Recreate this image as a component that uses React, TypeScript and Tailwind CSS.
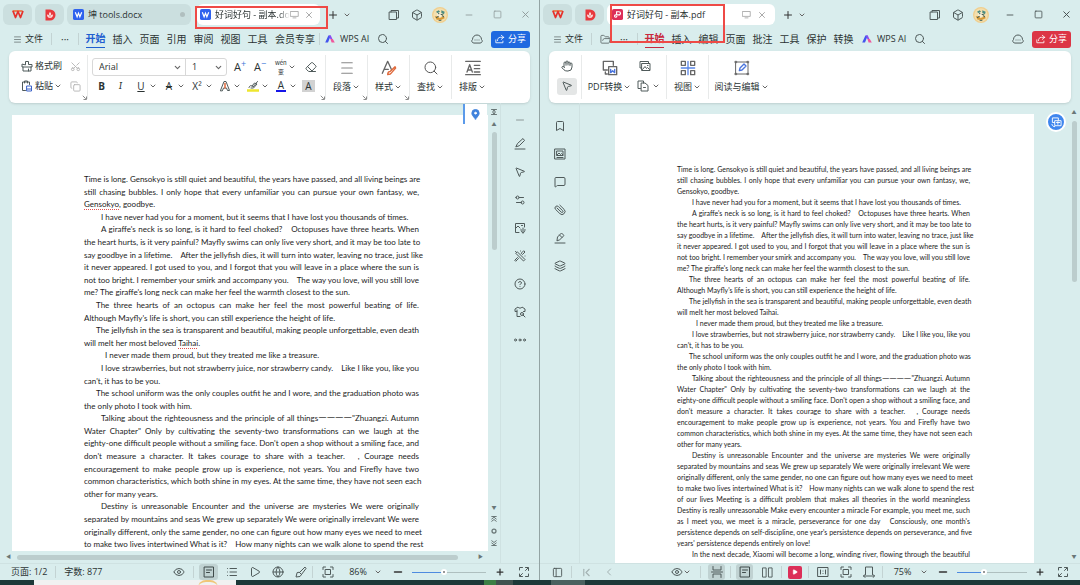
import type { ReactNode } from "react";
import { clsx } from "clsx";
import {
    Bookmark, Box, ChevronDown, ChevronLeft, ChevronFirst, CircleHelp, Copy, Eraser, Eye, FolderOpen,
    Globe, Hand, Layers, List, Menu, MessageSquare, Minus, MousePointer2,
    PanelLeft, Paperclip, Play, Plus, Scissors, Search, Settings2, Square, X,
} from "lucide-react";

const ico = "size-3 text-[#4f5a5a]";

type Line = { text: string; indent?: "s" | "m" | "l"; last?: boolean };

// "~" marks words flagged by the spell checker
const lines: Line[] = [
    { text: "Time is long. Gensokyo is still quiet and beautiful, the years have passed, and all living beings are" },
    { text: "still chasing bubbles. I only hope that every unfamiliar you can pursue your own fantasy, we," },
    { text: "~Gensokyo~, goodbye.", last: true },
    { text: "I have never had you for a moment, but it seems that I have lost you thousands of times.", indent: "m", last: true },
    { text: "A giraffe's neck is so long, is it hard to feel choked?\u3000Octopuses have three hearts. When", indent: "m" },
    { text: "the heart hurts, is it very painful? Mayfly swims can only live very short, and it may be too late to" },
    { text: "say goodbye in a lifetime.\u3000After the jellyfish dies, it will turn into water, leaving no trace, just like" },
    { text: "it never appeared. I got used to you, and I forgot that you will leave in a place where the sun is" },
    { text: "not too bright. I remember your smirk and accompany you.\u3000The way you love, will you still love" },
    { text: "me? The giraffe's long neck can make her feel the warmth closest to the sun.", last: true },
    { text: "The three hearts of an octopus can make her feel the most powerful beating of life.", indent: "s" },
    { text: "Although Mayfly's life is short, you can still experience the height of life.", last: true },
    { text: "The jellyfish in the sea is transparent and beautiful, making people unforgettable, even death", indent: "s" },
    { text: "will melt her most beloved ~Taihai~.", last: true },
    { text: "I never made them proud, but they treated me like a treasure.", indent: "l", last: true },
    { text: "I love strawberries, but not strawberry juice, nor strawberry candy.\u3000Like I like you, like you", indent: "m" },
    { text: "can't, it has to be you.", last: true },
    { text: "The school uniform was the only couples outfit he and I wore, and the graduation photo was", indent: "s" },
    { text: "the only photo I took with him.", last: true },
    { text: "Talking about the righteousness and the principle of all things一一一一\"Zhuangzi. Autumn", indent: "m" },
    { text: "Water Chapter\" Only by cultivating the seventy-two transformations can we laugh at the" },
    { text: "eighty-one difficult people without a smiling face. Don't open a shop without a smiling face, and" },
    { text: "don't measure a character. It takes courage to share with a teacher.\u3000, Courage needs" },
    { text: "encouragement to make people grow up is experience, not years. You and Firefly have two" },
    { text: "common characteristics, which both shine in my eyes. At the same time, they have not seen each" },
    { text: "other for many years.", last: true },
    { text: "Destiny is unreasonable Encounter and the universe are mysteries We were originally", indent: "m" },
    { text: "separated by mountains and seas We grew up separately We were originally irrelevant We were" },
    { text: "originally different, only the same gender, no one can figure out how many eyes we need to meet" },
    { text: "to make two lives intertwined What is it?\u3000How many nights can we walk alone to spend the rest" },
    { text: "of our lives Meeting is a difficult problem that makes all theories in the world meaningless" },
    { text: "Destiny is really unreasonable Make every encounter a miracle For example, you meet me, such" },
    { text: "as I meet you, we meet is a miracle, perseverance for one day\u3000Consciously, one month's" },
    { text: "persistence depends on self-discipline, one year's persistence depends on perseverance, and five" },
    { text: "years' persistence depends entirely on love!", last: true },
    { text: "In the next decade, Xiaomi will become a long, winding river, flowing through the beautiful", indent: "m" },
];

function Icon({ children, className = ico }: { children: ReactNode; className?: string }) {
    return (
        <svg viewBox="0 0 24 24" fill="none" stroke="currentColor" strokeWidth="2" strokeLinecap="round" strokeLinejoin="round" className={clsx("shrink-0", className)} aria-hidden="true">
            {children}
        </svg>
    );
}

function Btn({ label, className, children }: { label: string; className?: string; children: ReactNode }) {
    return (
        <button aria-label={label} className={clsx("flex shrink-0 items-center justify-center", className)}>
            {children}
        </button>
    );
}

function Caret({ className = "size-2" }: { className?: string }) {
    return <ChevronDown strokeWidth={3} className={clsx("shrink-0 text-[#666]", className)} />;
}

function Sep({ className }: { className?: string }) {
    return <span className={clsx("h-3 w-px shrink-0 bg-[#c3d3d3]", className)} />;
}

function WpsLogo() {
    return (
        <svg viewBox="0 0 24 18" className="h-[9px] w-3" fill="none" strokeLinejoin="round" aria-hidden="true">
            <path d="M1 2h20" stroke="#f2632d" strokeWidth="3" />
            <path d="M2 2l5 13 5-12 5 12 5-13" stroke="#e5322d" strokeWidth="3.500" />
        </svg>
    );
}

function DocerLogo() {
    return (
        <svg viewBox="0 0 24 24" className="size-3" aria-hidden="true">
            <path d="M3 1h9a11 11 0 0 1 0 22H3z" fill="#e8383d" />
            <path d="M12 6c3 3 3 5 0 8-3-3-3-5 0-8zM6 11c4 0 6 3 6 7-4 0-6-3-6-7zM18 11c-4 0-6 3-6 7 4 0 6-3 6-7z" fill="#fbdcdc" />
        </svg>
    );
}

function WriterIcon() {
    return (
        <svg viewBox="0 0 24 24" className="size-[11px] shrink-0" aria-hidden="true">
            <rect width="24" height="24" rx="4" fill="#2f62ee" />
            <path d="M5 7l4 10 3-8 3 8 4-10" stroke="#fff" strokeWidth="2.600" fill="none" />
        </svg>
    );
}

function PdfIcon() {
    return (
        <svg viewBox="0 0 24 24" className="size-[11px] shrink-0" aria-hidden="true">
            <rect width="24" height="24" rx="4" fill="#dc2f58" />
            <path d="M10 13V6h5a3.500 3.500 0 0 1 0 7H8a2.500 2.500 0 1 0 2.500 2.500" stroke="#fff" strokeWidth="2.600" fill="none" />
        </svg>
    );
}

function Avatar() {
    return (
        <svg viewBox="0 0 24 24" className="size-4" aria-hidden="true">
            <circle cx="12" cy="12" r="12" fill="#f0cf8e" />
            <circle cx="12" cy="12" r="10" fill="#f3dfae" />
            <path d="M6 7l4-2 2 2-3 3zM14 5l5 2-1 4-4-2z" fill="#4c8c82" />
            <path d="M8 9l4-1 3 3-2 4-5-1z" fill="#fbf1d8" />
            <path d="M4 14l5 0 2 3 7-3 1 3-5 2H7z" fill="#d99a36" />
            <path d="M9 10h2M13 11l4 1M6 16l4-2M15 13l3 2M10 20h4" stroke="#3e5d58" strokeWidth="1.500" />
        </svg>
    );
}

function AiLogo() {
    return (
        <svg viewBox="0 0 24 20" className="mr-[5px] h-2 w-[10px]" aria-hidden="true">
            <path d="M8 1h6L7 19H0z" fill="#4254ee" />
            <path d="M9 1h5l4 9h-5z" fill="#8c4bf0" />
            <path d="M13 10h6l5 9h-8z" fill="#f0569c" />
        </svg>
    );
}

function WindowButtons({ faded }: { faded?: boolean }) {
    const tone = faded ? "text-[#8d9898]" : "text-[#3f4848]";
    return (
        <div className="ml-auto flex items-center">
            <Btn label="窗口" className="w-[23px]">
                <Icon><path d="M3 6h14v15H3zM6 6V3h15v15h-4" /></Icon>
            </Btn>
            <Btn label="应用" className="w-[23px]"><Box className={ico} /></Btn>
            <Btn label="账户" className="w-[23px]"><Avatar /></Btn>
            <Btn label="最小化" className="ml-1 w-7"><Minus className={clsx("size-[10px]", tone)} /></Btn>
            <Btn label="最大化" className="w-7"><Square className={clsx("size-[9px]", tone)} /></Btn>
            <Btn label="关闭" className="w-7"><X className={clsx("size-[11px]", tone)} /></Btn>
        </div>
    );
}

function AppTabs() {
    return (
        <>
            <Btn label="WPS" className="h-[21px] w-[29px] rounded-md bg-[#cbdfdf]"><WpsLogo /></Btn>
            <Btn label="稻壳" className="h-[21px] w-[29px] rounded-md bg-[#cbdfdf]"><DocerLogo /></Btn>
        </>
    );
}

function MenuBar({ items, accent, children }: { items: string[]; accent: "blue" | "red"; children?: ReactNode }) {
    return (
        <nav className="flex h-5 items-center pr-[9px] pl-[13px] text-[10px]">
            <button className="flex items-center gap-[3px] text-[9px]"><Menu className="size-[9px] text-[#657070]" />文件</button>
            <Sep className="ml-2" />
            {children}
            <Btn label="更多" className="w-[26px]">···</Btn>
            <Sep className="mr-[3px]" />
            {items.map((item, i) => (
                <button
                    key={item}
                    className={clsx(
                        "h-5 shrink-0 leading-[17px]",
                        item.length > 2 ? "w-12" : "w-[27px]",
                        i === 0 && "font-bold",
                        i === 0 && (accent === "blue" ? "text-[#1f5fd0]" : "text-[#c8283c]"),
                    )}
                >
                    {item}
                    {i === 0 && <span className={clsx("mx-auto block h-px w-[19px]", accent === "blue" ? "bg-[#1f5fd0]" : "bg-[#c8283c]")} />}
                </button>
            ))}
            {accent === "blue" && <Sep />}
            <button className="ml-[5px] flex shrink-0 items-center text-[9px]"><AiLogo />WPS AI</button>
            <Btn label="搜索" className="ml-2 w-3"><Search className={ico} /></Btn>
            <Btn label="云" className="ml-auto w-3">
                <Icon><path d="M5 20a4 4 0 0 1-2-7 9 9 0 0 1 18 0 4 4 0 0 1-2 7zM8 14h.1M12 14h.1M16 14h.1" /></Icon>
            </Btn>
            <button className={clsx("ml-2 flex h-[17px] w-[39px] shrink-0 items-center justify-center gap-[3px] rounded-[3px] text-[9px] text-white", accent === "blue" ? "bg-[#1f69e0]" : "bg-[#dc3545]")}>
                <Icon className="size-[10px]"><path d="M15 3l6 5-6 5M21 8h-8c-5 0-7 3-7 8M2 14v7h17v-4" /></Icon>
                分享
            </button>
        </nav>
    );
}

function Tool({ label, className, children }: { label: string; className: string; children: ReactNode }) {
    return (
        <button className={clsx("flex h-full shrink-0 flex-col items-center justify-center gap-[2px] border-l border-[#e8eaea] pb-[2px]", className)}>
            <span className="flex h-5 items-center">{children}</span>
            <span className="flex h-[14px] items-center gap-px leading-[14px]">{label}<Caret /></span>
        </button>
    );
}

function Split({ label, children }: { label: string; children: ReactNode }) {
    return (
        <button aria-label={label} className="flex w-7 shrink-0 items-center pl-[3px] leading-[13px]">
            <span className="flex w-4 justify-center">{children}</span>
            <Caret />
        </button>
    );
}

// Dialog launcher in a ribbon group's bottom right corner
function Corner() {
    return (
        <svg viewBox="0 0 8 8" className="absolute -right-px -bottom-[2px] size-[6px]" fill="none" stroke="#888" aria-hidden="true">
            <path d="M1 1l4 4M6 2v4H2" strokeWidth="1.300" />
        </svg>
    );
}

function Zoom({ id, value, fill, width }: { id: string; value: number; fill: string; width: string }) {
    return (
        <>
            <label htmlFor={id} className="sr-only">缩放</label>
            <input
                id={id}
                type="range"
                defaultValue={value}
                className={clsx(
                    "h-px shrink-0 appearance-none bg-linear-to-r from-[#4d8be0] to-[#aebfbf] [&::-webkit-slider-thumb]:size-[6px] [&::-webkit-slider-thumb]:appearance-none [&::-webkit-slider-thumb]:rounded-full [&::-webkit-slider-thumb]:border-2 [&::-webkit-slider-thumb]:border-white [&::-webkit-slider-thumb]:bg-[#777]",
                    fill,
                    width,
                )}
            />
        </>
    );
}

function FitIcon() {
    return <Icon><path d="M2 7V2h5M17 2h5v5M22 17v5h-5M7 22H2v-5M7 7h10v10H7z" /></Icon>;
}

function PageIcon() {
    return <Icon className="size-3 text-[#3f4a4a]"><path d="M3 2h18v20H3zM7 8h10M7 13h6" /></Icon>;
}

function ExpandIcon() {
    return <Icon><path d="M3 8V3h6M15 3h6v6M21 16v5h-6M9 21H3v-5M15 9l5-5M9 15l-5 5" /></Icon>;
}

function DocText({ rows, indents, className, spell }: { rows: Line[]; indents: { s: string; m: string; l: string }; className: string; spell?: boolean }) {
    return (
        <article className={clsx("flex flex-col font-[Lato,'Noto_Sans_CJK_SC',sans-serif] text-[#1c1c1c]", className)}>
            {rows.map((row) => (
                <p key={row.text} className={clsx("min-h-0 flex-1 whitespace-nowrap", row.last ? "text-left" : "text-justify [text-align-last:justify]", row.indent && indents[row.indent])}>
                    {row.text.split("~").map((part, i) =>
                        i % 2 && spell ? <span key={i} className="underline decoration-[#e0504f] decoration-dotted decoration-1 underline-offset-2">{part}</span> : part,
                    )}
                </p>
            ))}
        </article>
    );
}

function WriterRibbon() {
    return (
        <div className="mx-[9px] flex h-[52px] shrink-0 items-center rounded-md bg-white pl-3 text-[9px] shadow-sm">
            <div className="relative flex h-11 w-[66px] shrink-0 flex-col justify-center gap-1 pb-[2px]">
                <div className="flex h-4 items-center">
                    <button className="flex items-center gap-[2px]">
                        <Icon><path d="M9 9V3h6v6h7v5H2V9zM4 14v8h16v-8M15 18v4" /></Icon>格式刷
                    </button>
                    <Btn label="剪切" className="ml-2"><Scissors className="size-[11px] -rotate-90 text-[#b5b5b5]" /></Btn>
                </div>
                <div className="flex h-4 items-center">
                    <button className="flex items-center gap-[2px]">
                        <Icon><path d="M9 21H3V4h14v5M7 6V2h6v4" /><path d="M12 12h9v10h-9zM12 18h9" stroke="#3b62c8" /></Icon>粘贴
                    </button>
                    <Caret className="ml-px size-2" />
                    <Btn label="复制" className="ml-2"><Copy className="size-[11px] text-[#b5b5b5]" /></Btn>
                </div>
                <Corner />
            </div>
            <div className="relative flex h-11 w-[238px] shrink-0 flex-col justify-center gap-[2px] border-l border-[#e8eaea] pb-[2px] pl-1">
                <div className="flex h-[18px] items-center">
                    <div className="flex h-[18px] w-[135px] shrink-0 items-center rounded-[3px] border border-[#d8d8d8]">
                        <select aria-label="字体" className="w-20 appearance-none pl-[6px] outline-none"><option>Arial</option></select>
                        <Caret className="size-[9px]" />
                        <span className="ml-[3px] h-full w-px bg-[#d8d8d8]" />
                        <select aria-label="字号" className="w-7 appearance-none pl-[6px] outline-none"><option>1</option></select>
                        <Caret className="size-[9px]" />
                    </div>
                    <button className="ml-[3px] w-5 text-[11px] leading-3">A<sup className="text-[9px] text-[#3b76d8]">+</sup></button>
                    <button className="w-5 text-[11px] leading-3">A<sup className="text-[9px] text-[#3b76d8]">−</sup></button>
                    <button className="ml-[5px] flex w-6 items-center gap-px">
                        <span className="flex flex-col items-center font-['Noto_Sans_CJK_SC',sans-serif] text-[6px] leading-[9px]"><span>wén</span><span>变</span></span>
                        <Caret />
                    </button>
                    <Btn label="清除格式" className="ml-[2px] w-5"><Eraser className={ico} /></Btn>
                </div>
                <div className="flex h-4 items-center text-[10px]">
                    <button className="w-[19px] font-bold">B</button>
                    <button className="w-[19px] font-serif italic">I</button>
                    <Split label="下划线"><span className="underline">U</span></Split>
                    <Split label="删除线"><span className="line-through">A</span></Split>
                    <Split label="上标"><span>X²</span></Split>
                    <Split label="文字效果">
                        <Icon><path d="M3 21L10 3h4l7 18h-4l-2-5H9l-2 5z" /><path d="M12 7v9" stroke="#e06a3c" strokeWidth="3" /></Icon>
                    </Split>
                    <Split label="突出显示">
                        <Icon><path d="M4 15c2-6 6-4 8-1l9-11M10 12l5-6 5 2-7 8H8" /><path d="M1 21h22" stroke="#eee62e" strokeWidth="5" /></Icon>
                    </Split>
                    <Split label="字体颜色"><span className="border-b-2 border-[#1616e8] px-[2px] leading-[10px]">A</span></Split>
                    <button className="ml-1 w-[13px] bg-[#d2d2d2] leading-3">A</button>
                </div>
                <Corner />
            </div>
            <div className="flex h-11">
                <div className="relative">
                    <Tool label="段落" className="w-[42px]"><Icon className="size-[14px] text-[#888]"><path d="M3 3h18M3 12h18M3 21h18" /></Icon></Tool>
                    <Corner />
                </div>
                <div className="relative">
                    <Tool label="样式" className="w-[42px]">
                        <Icon className="size-4 text-[#666]"><path d="M2 20L10 2l6 13M5 14h6" /><path d="M10 22c0-4 2-5 4-5l7-7 1 2-6 7c-1 2-3 3-6 3z" stroke="#e06a3c" /></Icon>
                    </Tool>
                    <Corner />
                </div>
                <Tool label="查找" className="w-[42px]"><Search strokeWidth={1.5} className="size-4 text-[#555]" /></Tool>
                <Tool label="排版" className="w-[42px]">
                    <Icon className="size-4 text-[#666]"><path d="M1 2h22M1 22h22M3 18L7 7l4 11M5 15h4M14 8h8M14 13h8M14 18h8" /></Icon>
                </Tool>
            </div>
        </div>
    );
}

function WriterWindow() {
    return (
        <section className="flex min-h-0 min-w-0 flex-col border-r border-[#93a4a4] bg-[#d9eded] shadow-md">
            <header className="flex h-[29px] shrink-0 items-center gap-[3px] pl-[3px]">
                <AppTabs />
                <button className="flex h-[21px] w-[124px] shrink-0 items-center gap-1 rounded-md bg-[#cbdfdf] px-[6px] text-[9px]">
                    <WriterIcon />坤 tools.docx<span className="ml-auto size-[5px] rounded-full bg-[#b0bfbf]" />
                </button>
                <div className="relative ml-[3px] flex h-[21px] w-[123px] shrink-0 items-center rounded-md bg-white px-[3px] text-[9px]">
                    <WriterIcon />
                    <span className="ml-1 flex-1 overflow-hidden mask-r-from-85% whitespace-nowrap">好词好句 - 副本.docx</span>
                    <Icon className="mr-[2px] size-[9px] text-[#999]"><path d="M2 4h20v13H2zM8 21h8" /></Icon>
                    <Btn label="关闭标签" className="w-4"><X className="size-[10px] text-[#999]" /></Btn>
                    <span className="pointer-events-none absolute top-[2px] -right-2 -bottom-1 -left-[2px] border-2 border-[#ee4a46]" />
                </div>
                <Btn label="新建标签" className="ml-[3px] w-[14px]"><Plus className="size-3 text-[#333]" /></Btn>
                <Caret />
                <WindowButtons faded />
            </header>
            <MenuBar accent="blue" items={["开始", "插入", "页面", "引用", "审阅", "视图", "工具", "会员专享"]} />
            <div className="h-[2px] shrink-0" />
            <WriterRibbon />
            <div className="flex min-h-0 flex-1">
                <div className="relative flex min-w-0 flex-1 flex-col pt-3 pl-3">
                    <div className="absolute top-px right-px flex h-[20px] w-6 items-center justify-center border-l-2 border-[#5b9aea] bg-white pr-[2px]">
                        <Icon className="size-[11px] text-[#3f82dc]"><path d="M12 22C5 14 4 12 4 9a8 8 0 0 1 16 0c0 3-1 5-8 13z" fill="currentColor" /><circle cx="12" cy="9" r="2" fill="#fff" stroke="#fff" /></Icon>
                    </div>
                    <div className="flex min-h-0 flex-1 bg-white pt-[58px] pr-[69px] pl-[72px]">
                        <DocText spell rows={lines.slice(0, 30)} indents={{ s: "pl-[12px]", m: "pl-[17px]", l: "pl-[21px]" }} className="min-w-0 flex-1 text-[8px] leading-[13px]" />
                    </div>
                    <div className="-ml-3 flex h-3 shrink-0 items-center pr-[5px] pl-[6px]">
                        <span className="text-[5px] text-[#6a7777]">◀</span>
                        <span className="mr-5 ml-[6px] h-[5px] flex-1 rounded-full bg-[#bccdcd]" />
                        <span className="text-[5px] text-[#6a7777]">▶</span>
                    </div>
                </div>
                <div className="flex w-3 shrink-0 flex-col items-center pt-[6px] pb-[14px] text-[5px] leading-[11px] text-[#6a7777]">
                    <Icon className="size-[6px]"><path d="M2 2h20M2 22h20M12 4v16M7 9l5-4 5 4M7 15l5 4 5-4" strokeWidth="4" /></Icon>
                    <span className="mt-1">▲</span>
                    <span className="mt-[2px] h-[118px] w-[5px] shrink-0 rounded-full bg-[#bccdcd]" />
                    <span className="mt-auto">▼</span>
                    <Icon className="my-[3px] size-[6px]"><path d="M3 2h18M3 12l9-7 9 7M3 21l9-7 9 7" strokeWidth="4" /></Icon>
                    <Icon className="my-[3px] size-[6px]"><circle cx="12" cy="12" r="8" strokeWidth="5" /></Icon>
                    <Icon className="my-[3px] size-[6px]"><path d="M3 3l9 7 9-7M3 12l9 7 9-7M3 22h18" strokeWidth="4" /></Icon>
                </div>
                <aside className="flex w-[39px] shrink-0 flex-col items-center border-l border-[#cfe2e2] pt-[3px]">
                    <Btn label="收起" className="-mb-1 h-7"><Minus className="size-3 text-[#8d9898]" /></Btn>
                    <Btn label="编辑" className="h-7"><Icon><path d="M4 17l3-6L18 1l3 4L11 15zM2 22h20" /></Icon></Btn>
                    <Btn label="选择" className="h-7"><MousePointer2 className={ico} /></Btn>
                    <Btn label="设置" className="h-7"><Settings2 className={clsx(ico, "rotate-180")} /></Btn>
                    <Btn label="图片" className="h-7">
                        <Icon><path d="M10 21H3V3h18v7M3 13l5-5 4 4M15 7h2" /><path d="M18 12v10M14 15c0 4 2 6 4 7 2-1 4-3 4-7" /></Icon>
                    </Btn>
                    <Btn label="工具箱" className="h-7">
                        <Icon><path d="M7 4l15 15-3 3L4 7zM20 2l2 2-5 5-2-2zM2 20l5-5 2 2-5 5zM3 3h.1M13 2h.1M22 12h.1" /></Icon>
                    </Btn>
                    <Btn label="帮助" className="h-7"><CircleHelp className={ico} /></Btn>
                    <Btn label="换肤" className="h-7">
                        <Icon><path d="M12 21H6V11H2V6l6-4c1 3 7 3 8 0l6 4v5h-3M6 11V8" /><circle cx="16" cy="16" r="3" /><path d="M18 18l4 4" /></Icon>
                    </Btn>
                    <Btn label="更多工具" className="h-7">
                        <Icon><circle cx="3" cy="12" r="2" /><circle cx="12" cy="12" r="2" /><circle cx="21" cy="12" r="2" /></Icon>
                    </Btn>
                </aside>
            </div>
            <footer className="flex h-[17px] shrink-0 items-center border-t border-[#cfe2e2] pr-[5px] pl-[11px] text-[9px]">
                <span>页面: 1/2</span>
                <Sep className="mx-2" />
                <span>字数: 877</span>
                <div className="ml-auto flex h-full items-center">
                    <Btn label="护眼" className="w-6"><Eye className={ico} /></Btn>
                    <Sep className="mr-[3px] ml-[2px]" />
                    <Btn label="页面视图" className="mx-[2px] h-4 w-[19px] rounded-[3px] bg-[#c0d2d2]"><PageIcon /></Btn>
                    <Btn label="大纲" className="w-[23px]"><List className={ico} /></Btn>
                    <Btn label="播放" className="w-[23px]"><Play className={ico} /></Btn>
                    <Btn label="网页视图" className="w-[23px]"><Globe className={ico} /></Btn>
                    <Btn label="写作" className="w-[23px]"><Icon><path d="M9 13L20 2l2 3-9 12M9 13l4 4-3 4-8 1 2-8z" /></Icon></Btn>
                    <Sep />
                    <Btn label="适应" className="w-[29px]"><FitIcon /></Btn>
                    <span className="w-8 text-center">86%</span>
                    <Caret className="mr-[2px] size-2" />
                    <Btn label="缩小" className="w-7"><Minus strokeWidth={3} className="size-3 text-[#333]" /></Btn>
                    <Zoom id="zoom-writer" value={42} fill="from-43% to-43%" width="w-[74px]" />
                    <Btn label="放大" className="w-7"><Plus strokeWidth={3} className="size-[10px] text-[#333]" /></Btn>
                    <Btn label="全屏" className="w-5"><ExpandIcon /></Btn>
                </div>
            </footer>
        </section>
    );
}

function PdfRibbon() {
    return (
        <div className="mx-[9px] flex h-[52px] shrink-0 items-center rounded-md bg-white text-[9px] shadow-sm">
            <div className="flex w-8 shrink-0 flex-col items-center gap-[3px] pb-[2px] pl-1">
                <Btn label="手型" className="h-[17px] w-5"><Hand className={ico} /></Btn>
                <Btn label="选择" className="h-[17px] w-5 rounded-[3px] bg-[#e4e6e6]"><MousePointer2 className={ico} /></Btn>
            </div>
            <div className="flex h-11">
                <Tool label="PDF转换" className="w-[56px]">
                    <Icon className="size-4 text-[#666]"><path d="M8 15H2V2h15v6M5 18v3h3" /><path d="M10 10h12v12H10z" /><path d="M13 14v5l3-3 3 3v-5" stroke="#4a74dc" /></Icon>
                </Tool>
                <div className="flex w-[29px] flex-col justify-center gap-1 pb-[2px]">
                    <Btn label="图片" className="mr-[14px] h-4">
                        <Icon><path d="M5 16H2V3h17v3M6 7h16v14H6zM7 19l5-6 3 4 2-2 4 4M17 11h1" /></Icon>
                    </Btn>
                    <button aria-label="拆分合并" className="flex h-4 items-center gap-[3px]">
                        <Icon><path d="M7 17H2V2h11v4M9 6h7l6 5v11H9zM13 15h4" /></Icon><Caret />
                    </button>
                </div>
                <Tool label="视图" className="w-[42px]">
                    <Icon className="size-4 text-[#666]"><path d="M2 2h6v6H2zM16 2h6v6h-6zM2 16h6v6H2zM16 16h6v6h-6z" /><path d="M12 2v20M2 12h20" stroke="#5a86e8" /></Icon>
                </Tool>
                <Tool label="阅读与编辑" className="w-[66px]">
                    <Icon className="size-4 text-[#666]"><path d="M3 3h18v18H3zM2 2h2v2H2zM20 2h2v2h-2zM2 20h2v2H2zM20 20h2v2h-2z" strokeWidth="1.500" /><path d="M8 16l1-4 6-6 3 3-6 6z" stroke="#4a74dc" /></Icon>
                </Tool>
            </div>
        </div>
    );
}

function PdfWindow() {
    return (
        <section className="flex min-h-0 min-w-0 flex-col bg-[#d9eded]">
            <header className="flex h-[29px] shrink-0 items-center gap-[3px] pl-[3px]">
                <AppTabs />
                <div className="relative flex h-[21px] w-[168px] shrink-0 items-center rounded-md bg-white px-[5px] text-[9px]">
                    <PdfIcon />
                    <span className="ml-1 flex-1 whitespace-nowrap">好词好句 - 副本.pdf</span>
                    <Icon className="mx-[3px] size-[9px] text-[#999]"><path d="M2 4h20v13H2zM8 21h8" /></Icon>
                    <Btn label="关闭标签" className="w-4"><X className="size-[10px] text-[#999]" /></Btn>
                    <span className="pointer-events-none absolute top-0 left-[3px] h-[39px] w-[115px] border-2 border-[#ee4a46]" />
                </div>
                <Btn label="新建标签" className="ml-[3px] w-[14px]"><Plus className="size-3 text-[#333]" /></Btn>
                <Caret />
                <WindowButtons />
            </header>
            <MenuBar accent="red" items={["开始", "插入", "编辑", "页面", "批注", "工具", "保护", "转换"]}>
                <Btn label="打开" className="ml-[7px] w-3"><FolderOpen className="size-[11px] text-[#657070]" /></Btn>
            </MenuBar>
            <div className="h-[2px] shrink-0" />
            <PdfRibbon />
            <div className="flex min-h-0 flex-1">
                <aside className="flex w-10 shrink-0 flex-col items-center border-r border-[#cfe2e2] pt-[9px]">
                    <Btn label="书签" className="h-7"><Bookmark className={ico} /></Btn>
                    <Btn label="缩略图" className="h-7"><Icon><path d="M2 2h20v20H2zM6 6h12v9H6zM6 14l4-4 3 3 2-2 3 3M6 19h12" /></Icon></Btn>
                    <Btn label="批注" className="h-7"><MessageSquare className={ico} /></Btn>
                    <Btn label="附件" className="h-7"><Paperclip className={clsx(ico, "-rotate-90")} /></Btn>
                    <Btn label="签名" className="h-7"><Icon><path d="M6 17l1-7 8-8 5 5-8 8zM11 6l5 5M2 22h20" /></Icon></Btn>
                    <Btn label="图层" className="h-7"><Layers className={ico} /></Btn>
                </aside>
                <div className="flex min-w-0 flex-1 pt-[11px] pl-[35px]">
                    <div className="min-w-0 flex-1 overflow-hidden bg-white pt-[50px] pr-16 pl-[62px]">
                        <DocText rows={lines} indents={{ s: "pl-[12px]", m: "pl-[15px]", l: "pl-[19px]" }} className="text-[7px] leading-[11px]" />
                    </div>
                </div>
                <div className="flex w-[46px] shrink-0 justify-between pl-3">
                    <Btn label="翻译" className="mt-[9px] size-5 rounded-full border-2 border-white bg-[#3f86ee] text-white">
                        <Icon className="size-[11px] text-white"><path d="M8 12H3V2h13v5M9 8h13v11H9zM12 12h7M15 10v6M2 16c1 4 3 5 6 5" /></Icon>
                    </Btn>
                    <div className="flex w-3 flex-col items-center pt-1 pb-[2px] text-[5px] leading-[10px] text-[#6a7777]">
                        <span>▲</span>
                        <span className="mt-1 h-[161px] w-[5px] rounded-full bg-[#bccdcd]" />
                        <span className="mt-auto">▼</span>
                    </div>
                </div>
            </div>
            <footer className="flex h-[17px] shrink-0 items-center border-t border-[#cfe2e2] pr-[7px] pl-[5px] text-[9px]">
                <Btn label="侧栏" className="w-6"><PanelLeft className="size-[11px] text-[#4f5a5a]" /></Btn>
                <Sep className="mx-[2px]" />
                <Btn label="首页" className="w-6"><ChevronFirst className="size-[13px] text-[#a3b1b1]" /></Btn>
                <Btn label="上一页" className="w-[22px]"><ChevronLeft className="size-3 text-[#a3b1b1]" /></Btn>
                <div className="ml-auto flex items-center">
                    <Btn label="护眼" className="w-6"><Eye className={ico} /><Caret /></Btn>
                    <Sep className="mx-[7px]" />
                    <Btn label="连续" className="h-4 w-[17px] rounded-[3px] bg-[#c0d2d2]"><Icon><path d="M4 1v7h16V1M4 23v-7h16v7M1 12h22" /></Icon></Btn>
                    <Sep className="mx-[5px]" />
                    <Btn label="单页" className="h-4 w-[17px] rounded-[3px] bg-[#c0d2d2]"><PageIcon /></Btn>
                    <Btn label="双页" className="w-7"><Icon className="size-[11px] text-[#4f5a5a]"><path d="M2 2h7v20H2zM15 2h7v20h-7z" /></Icon></Btn>
                    <Sep />
                    <Btn label="放映" className="mx-[6px] h-[13px] w-[14px] rounded-[2px] bg-[#dc2f58]"><Play fill="white" className="size-[6px] text-white" /></Btn>
                    <Sep className="mr-[2px]" />
                    <Btn label="实际大小" className="w-6"><Icon><path d="M2 3h20v18H2zM7 8v8M17 8v8M12 10v.1M12 15v.1" /></Icon></Btn>
                    <Btn label="适应页面" className="w-[22px]"><FitIcon /></Btn>
                    <Btn label="适应宽度" className="w-[23px]"><Icon><path d="M5 17V2h14v15M1 20h22M4 17l-3 3 3 3M20 17l3 3-3 3" /></Icon></Btn>
                    <Sep className="mx-[2px]" />
                    <span className="w-[35px] text-center">75%</span>
                    <Caret />
                    <Btn label="缩小" className="w-[29px]"><Minus strokeWidth={3} className="size-3 text-[#333]" /></Btn>
                    <Zoom id="zoom-pdf" value={37} fill="from-38% to-38%" width="w-[70px]" />
                    <Btn label="放大" className="w-[26px]"><Plus strokeWidth={3} className="size-[10px] text-[#333]" /></Btn>
                    <Btn label="全屏" className="w-5"><ExpandIcon /></Btn>
                </div>
            </footer>
        </section>
    );
}

export default function App() {
    return (
        <div className="flex h-screen flex-col overflow-hidden font-['Open_Sans','Noto_Sans_CJK_SC',sans-serif] text-[#2b3333]">
            <main className="grid min-h-0 flex-1 grid-cols-2 grid-rows-[minmax(0,1fr)]">
                <WriterWindow />
                <PdfWindow />
            </main>
            <div className="flex h-[5px] shrink-0 bg-[#1d3838]">
                <span className="ml-[34px] flex w-[202px] justify-center overflow-hidden bg-[#f1f1f1] pl-[146px]">
                    <span className="h-2 w-5 rounded-t-full border-t-2 border-[#f0c677]" />
                </span>
                <span className="ml-[248px] w-3 bg-[#3c7f45]" />
                <span className="w-[17px] bg-[#40524f]" />
                <span className="ml-[38px] w-[34px] bg-[#4a615f]" />
            </div>
        </div>
    );
}
